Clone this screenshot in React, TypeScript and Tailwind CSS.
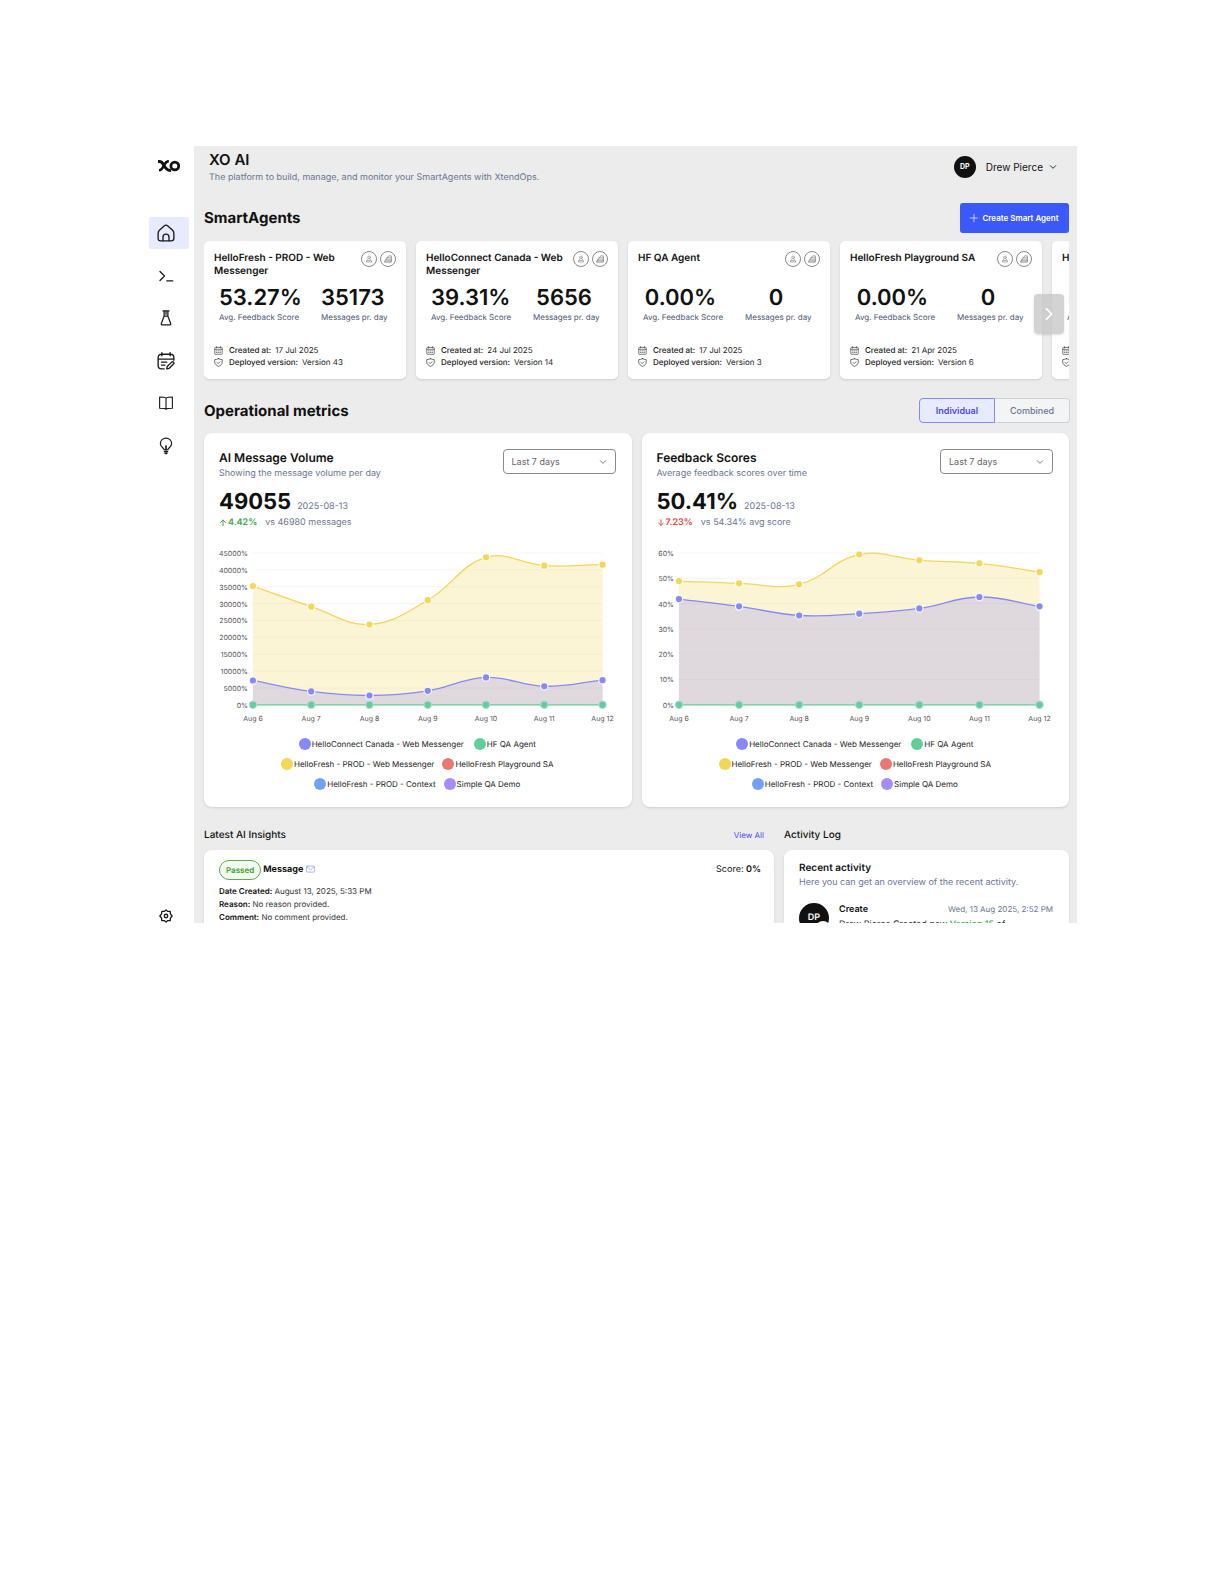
import type { ReactNode } from "react";

type Series = { color: string; values: number[] };

const AGENTS = [
  { name: "HelloFresh - PROD - Web Messenger", score: "53.27%", perDay: "35173", created: "17 Jul 2025", version: "Version 43" },
  { name: "HelloConnect Canada - Web Messenger", score: "39.31%", perDay: "5656", created: "24 Jul 2025", version: "Version 14" },
  { name: "HF QA Agent", score: "0.00%", perDay: "0", created: "17 Jul 2025", version: "Version 3" },
  { name: "HelloFresh Playground SA", score: "0.00%", perDay: "0", created: "21 Apr 2025", version: "Version 6" },
  { name: "HelloFresh - PROD - Context", score: "0.00%", perDay: "0", created: "21 Apr 2025", version: "Version 2" },
];

const DAYS = ["Aug 6", "Aug 7", "Aug 8", "Aug 9", "Aug 10", "Aug 11", "Aug 12"];

const LEGEND = [
  [
    { label: "HelloConnect Canada - Web Messenger", dot: "bg-[#8789f7]" },
    { label: "HF QA Agent", dot: "bg-[#62cf9a]" },
  ],
  [
    { label: "HelloFresh - PROD - Web Messenger", dot: "bg-[#f4d658]" },
    { label: "HelloFresh Playground SA", dot: "bg-[#ea7872]" },
  ],
  [
    { label: "HelloFresh - PROD - Context", dot: "bg-[#73a1f8]" },
    { label: "Simple QA Demo", dot: "bg-[#a78bf8]" },
  ],
];

function Icon({ size, children, width = 1.5, className }: { size: number; children: ReactNode; width?: number; className?: string }) {
  return (
    <svg
      width={size}
      height={size}
      viewBox="0 0 24 24"
      fill="none"
      stroke="currentColor"
      strokeWidth={width}
      strokeLinecap="round"
      strokeLinejoin="round"
      className={className}
      aria-hidden="true"
    >
      {children}
    </svg>
  );
}

const HomeIcon = () => (
  <Icon size={18} width={1.8}>
    <path d="M1.5 12.5C1.5 10.2 1.6 9.6 3.2 8.2L9.5 2.6C11.3 1 12.7 1 14.5 2.6L20.8 8.2C22.4 9.6 22.5 10.2 22.5 12.5V19C22.5 21.8 21.8 22.5 19 22.5H5C2.2 22.5 1.5 21.8 1.5 19Z" />
    <path d="M8 22.3V17.5C8 15 9.6 13.5 12 13.5S16 15 16 17.5V22.3" />
  </Icon>
);
const PromptIcon = () => (
  <Icon size={18} width={1.7}>
    <path d="M4 6l6 6-6 6M13 18.5h8" />
  </Icon>
);
const FlaskIcon = () => (
  <Icon size={18} width={1.7}>
    <path d="M8 2.500h8M9.500 2.500v7L5.800 19.400C5.400 20.600 6 21.300 7 21.300h10c1 0 1.600-.7 1.200-1.900L14.500 9.500v-7M9.500 9.500h5M12 3v4" />
  </Icon>
);
const CalendarEditIcon = () => (
  <Icon size={18} width={1.8}>
    <path d="M6.500 1v4M17.500 1v4M1.500 9.500h21M22.500 11V7.500c0-2.800-1.700-4.500-4.500-4.500H6C3.200 3 1.500 4.700 1.500 7.500V18c0 2.800 1.700 4.500 4.500 4.500h3.500M6 13.500h7M6 17.500h4.500" />
    <path d="M13 22.500l.6-3.200 6-5.800c.9-.8 1.800-.7 2.500 0s.7 1.600-.1 2.500l-6 5.900z" />
  </Icon>
);
const BookIcon = () => (
  <Icon size={18} width={1.5}>
    <path d="M12 5.500C10.500 4.300 8 4 3.500 4v15c4.500 0 7 .2 8.500 1.300 1.500-1.100 4-1.300 8.500-1.300V4c-4.500 0-7 .3-8.500 1.500zM12 5.500v14.800" />
  </Icon>
);
const BulbIcon = () => (
  <Icon size={18} width={1.6}>
    <path d="M9.500 17C9.200 14.500 4.500 13.500 4.500 8.500 4.500 4.500 8 1.500 12 1.500s7.500 3 7.500 7c0 5-4.700 6-5 8.500z" />
    <path d="M12 12v5M10 19.500h4M11 22h2" strokeWidth="2.200" />
  </Icon>
);
const GearIcon = () => (
  <Icon size={14} width={2.300}>
    <path d="M12 1.500l3 2.700 4.200-.2.400 4.200 2.900 3.800-2.900 3.800-.4 4.200-4.200-.2-3 2.700-3-2.700-4.200.2-.4-4.200L1.500 12l2.900-3.800.4-4.200 4.200.2z" />
    <circle cx="12" cy="12" r="3" />
  </Icon>
);
const ChevronDown = ({ size = 8 }: { size?: number }) => (
  <Icon size={size} width={2.600}>
    <path d="M4 8l8 8 8-8" />
  </Icon>
);
const CalendarIcon = () => (
  <Icon size={9} width={1.500}>
    <path d="M2 5.500c0-1 .6-1.700 1.700-1.700h16.600c1.100 0 1.700.7 1.700 1.700v15c0 1-.6 1.700-1.700 1.700H3.700c-1.100 0-1.700-.7-1.700-1.700zM2 9h20M7 1.500v4M17 1.500v4" />
    <path d="M6 13h2M11 13h2M16 13h2M6 17.500h2M11 17.500h2M16 17.500h2" />
  </Icon>
);
const ShieldIcon = () => (
  <Icon size={9} width={1.700}>
    <path d="M12 2c3 1.500 6 2 10 2.200V11c0 5.500-4.500 9-10 11.300C6.500 20 2 16.500 2 11V4.200C6 4 9 3.500 12 2z" />
    <path d="M8 12l3 3 5-5" />
  </Icon>
);

function Logo() {
  return (
    <svg width="22" height="12" viewBox="0 0 22 12" fill="none" stroke="#111" aria-label="XO" role="img">
      <path d="M0 1.600C3.500 1.200 4.200 2.400 5.800 5.200 7.500 8.600 9 10.800 13 10.400" strokeWidth="3" />
      <path d="M10.800 1.200C8 1.200 7.200 3 6 5.200 4.800 8 3.600 10.200 1 10.200" strokeWidth="2.600" />
      <circle cx="16.800" cy="6" r="3.900" strokeWidth="2.800" />
    </svg>
  );
}

function NavItem({ label, active, children }: { label: string; active?: boolean; children: ReactNode }) {
  return (
    <a
      href="#"
      aria-label={label}
      className={
        active
          ? "flex h-8 items-center rounded-[2px] bg-[#e8ebfd] pl-2"
          : "flex h-8 items-center rounded-[2px] pl-2"
      }
    >
      {children}
    </a>
  );
}

function Sidebar() {
  return (
    <aside className="flex w-12 shrink-0 flex-col bg-white pl-[3px] pr-[5px] text-[#1b1b1b]">
      <div className="pl-[9px] pt-[14px]">
        <Logo />
      </div>
      <nav className="mt-[45px] flex h-[245px] flex-col justify-between">
        <NavItem label="Home" active><HomeIcon /></NavItem>
        <NavItem label="Prompts"><PromptIcon /></NavItem>
        <NavItem label="Tests"><FlaskIcon /></NavItem>
        <NavItem label="Planner"><CalendarEditIcon /></NavItem>
        <NavItem label="Knowledge"><BookIcon /></NavItem>
        <NavItem label="Insights"><BulbIcon /></NavItem>
      </nav>
      <a href="#" aria-label="Settings" className="mt-auto pl-[10px]">
        <GearIcon />
      </a>
    </aside>
  );
}

function RoundBadge({ label, children }: { label: string; children: ReactNode }) {
  return (
    <span role="img" aria-label={label} className="flex size-4 items-center justify-center rounded-full border border-[#8a8a8a] text-[#777]">
      {children}
    </span>
  );
}

function AgentCard({ agent }: { agent: (typeof AGENTS)[number] }) {
  return (
    <article className="flex h-[138px] w-[202px] shrink-0 flex-col rounded-[5px] bg-white px-[10px] pb-[11px] pt-[10px] shadow">
      <div className="flex h-[27px] items-start justify-between">
        <h3 className="mt-px w-[144px] text-[10px] font-semibold leading-[13px] text-[#111]">{agent.name}</h3>
        <div className="flex gap-[3px]">
          <RoundBadge label="Assistant">
            <Icon size={8} width={1.800}>
              <circle cx="12" cy="7" r="4" />
              <path d="M9 12c-3 1.500-4 4-5 9h16c-1-5-2-7.500-5-9M8 16.500h8" />
            </Icon>
          </RoundBadge>
          <RoundBadge label="Channel">
            <Icon size={8} width={2}>
              <path d="M2 21.500h20V2.500h-8l-3 6H8l-3 6zM10 8.500h12M6 14.500h16M4 18h18" />
            </Icon>
          </RoundBadge>
        </div>
      </div>
      <div className="mt-[7px] flex gap-[27px] pl-[5px] text-center">
        <div className="w-[75px] whitespace-nowrap">
          <p className="text-[22px] font-semibold leading-[26px] text-[#111]">{agent.score}</p>
          <p className="text-[8px] leading-[12px] text-[#4d5870]">Avg. Feedback Score</p>
        </div>
        <div className="w-[62px] whitespace-nowrap">
          <p className="text-[22px] font-semibold leading-[26px] text-[#111]">{agent.perDay}</p>
          <p className="text-[8px] leading-[12px] text-[#4d5870]">Messages pr. day</p>
        </div>
      </div>
      <dl className="mt-auto whitespace-nowrap text-[8px] leading-[12px] text-[#222]">
        <div className="flex items-center">
          <CalendarIcon />
          <dt className="ml-[6px] font-medium">Created at:</dt>
          <dd className="ml-1">{agent.created}</dd>
        </div>
        <div className="flex items-center">
          <ShieldIcon />
          <dt className="ml-[6px] font-medium">Deployed version:</dt>
          <dd className="ml-1">{agent.version}</dd>
        </div>
      </dl>
    </article>
  );
}

/* Cubic spline through the points, with control points spaced by segment length. */
function splinePath(points: { x: number; y: number }[], tension = 0.4) {
  const controls = points.map((p, i) => {
    const prev = points[i - 1] ?? p;
    const next = points[i + 1] ?? p;
    const d01 = Math.hypot(p.x - prev.x, p.y - prev.y);
    const d12 = Math.hypot(next.x - p.x, next.y - p.y);
    const fa = (tension * d01) / (d01 + d12);
    const fb = (tension * d12) / (d01 + d12);
    return {
      before: { x: p.x - fa * (next.x - prev.x), y: p.y - fa * (next.y - prev.y) },
      after: { x: p.x + fb * (next.x - prev.x), y: p.y + fb * (next.y - prev.y) },
    };
  });
  return points
    .map((p, i) => {
      if (i === 0) return `M${p.x} ${p.y}`;
      const a = controls[i - 1].after;
      const b = controls[i].before;
      return `C${a.x} ${a.y} ${b.x} ${b.y} ${p.x} ${p.y}`;
    })
    .join("");
}

function AreaChart({ title, left, right, max, step, series }: { title: string; left: number; right: number; max: number; step: number; series: Series[] }) {
  const top = 10;
  const bottom = 162;
  const px = (i: number) => left + ((right - left) * i) / (DAYS.length - 1);
  const py = (v: number) => bottom - ((bottom - top) * v) / max;
  const ticks = Array.from({ length: max / step + 1 }, (_, i) => i * step);
  const lines = series.map((s) => ({
    color: s.color,
    points: s.values.map((v, i) => ({ x: px(i), y: py(v) })),
  }));
  return (
    <svg viewBox="0 0 397 184" className="block w-full overflow-visible" role="img" aria-label={title}>
      {ticks.map((t) => (
        <g key={t}>
          <line x1={left} x2={right} y1={py(t)} y2={py(t)} stroke="#f5f5f5" />
          <text x={left - 5} y={py(t) + 3} textAnchor="end" fontSize="7" fill="#555">{t}%</text>
        </g>
      ))}
      {DAYS.map((d, i) => (
        <text key={d} x={px(i)} y={bottom + 16} textAnchor="middle" fontSize="7" fill="#555">{d}</text>
      ))}
      {lines.map((l) => (
        <path key={l.color} d={`${splinePath(l.points)}L${right} ${bottom}L${left} ${bottom}Z`} fill={l.color} fillOpacity="0.25" />
      ))}
      {lines.map((l) => (
        <g key={l.color}>
          <path d={splinePath(l.points)} fill="none" stroke={l.color} strokeWidth="1.300" />
          {l.points.map((p) => (
            <circle
              key={p.x}
              cx={p.x}
              cy={p.y}
              r="3.700"
              fill={l.color}
              stroke={p.y === bottom ? "#b9d3e6" : "#fff"}
              strokeOpacity="0.900"
              strokeWidth="1.200"
            />
          ))}
        </g>
      ))}
    </svg>
  );
}

function MetricCard(props: {
  id: string;
  title: string;
  subtitle: string;
  value: string;
  delta: string;
  up: boolean;
  compare: string;
  chart: ReactNode;
}) {
  return (
    <section className="rounded-lg bg-white pb-[13px] pl-[15px] pr-4 pt-4 shadow">
      <div className="flex items-start justify-between">
        <div className="mt-px">
          <h3 className="text-[12px] font-semibold leading-4 text-[#111]">{props.title}</h3>
          <p className="mt-px text-[9px] leading-[14px] text-[#6b7590]">{props.subtitle}</p>
        </div>
        <div className="relative flex">
          <label htmlFor={props.id} className="sr-only">Period</label>
          <select
            id={props.id}
            className="h-[25px] w-[113px] appearance-none rounded border border-[#8a8a8a] bg-white pl-2 text-[9px] text-[#666]"
          >
            <option>Last 7 days</option>
          </select>
          <span className="pointer-events-none absolute inset-y-0 right-[9px] flex items-center text-[#666]">
            <ChevronDown />
          </span>
        </div>
      </div>
      <p className="mt-2 flex h-[26px] items-baseline gap-[6px] leading-[26px]">
        <span className="text-[22px] font-bold text-[#111]">{props.value}</span>
        <span className="text-[9px] leading-none text-[#6b7590]">2025-08-13</span>
      </p>
      <p className="mt-[1px] flex gap-2 text-[9px] leading-[14px]">
        <span className={props.up ? "flex items-center gap-px font-semibold text-[#36a84a]" : "flex items-center gap-px font-semibold text-[#e5453b]"}>
          <Icon size={8} width={2.800}>
            <path d={props.up ? "M12 20V3M5 10l7-7 7 7" : "M12 2v17M5 12l7 7 7-7"} />
          </Icon>
          {props.delta}
        </span>
        <span className="text-[#6b7590]">{props.compare}</span>
      </p>
      <div className="mt-[13px]">{props.chart}</div>
      <ul className="mt-[7px] text-[8px] leading-5 text-[#222]">
        {LEGEND.map((row, i) => (
          <li key={i}>
            <ul className={i === 0 ? "flex justify-center gap-[10px]" : "flex justify-center gap-2"}>
              {row.map((item) => (
                <li key={item.label} className="flex items-center gap-px">
                  <span className={`size-3 rounded-full ${item.dot}`} />
                  {item.label}
                </li>
              ))}
            </ul>
          </li>
        ))}
      </ul>
    </section>
  );
}

const ZERO = [0, 0, 0, 0, 0, 0, 0];

export default function App() {
  return (
    <div className="min-h-screen bg-white px-[147px] pt-[146px] font-['Inter',sans-serif] text-[#111] [text-rendering:geometricPrecision]">
      <div className="-ml-px flex h-[777px] overflow-hidden">
        <Sidebar />
        <main className="min-w-0 flex-1 bg-[#ececec] pl-[10px] pr-2">
          <header className="flex justify-between pl-[5px] pr-3 pt-[6px]">
            <div>
              <h1 className="text-[15px] font-semibold leading-4">XO AI</h1>
              <p className="mt-[3px] text-[9px] leading-[13px] text-[#6b7590]">
                The platform to build, manage, and monitor your SmartAgents with XtendOps.
              </p>
            </div>
            <button type="button" className="mt-1 flex h-[22px] items-center text-[10px]">
              <span className="flex size-[22px] items-center justify-center rounded-full bg-[#111] text-[7px] font-bold text-white">DP</span>
              <span className="ml-[10px] mr-[6px]">Drew Pierce</span>
              <ChevronDown />
            </button>
          </header>

          <div className="mt-[19px] flex items-center justify-between">
            <h2 className="text-[15px] font-bold leading-5">SmartAgents</h2>
            <button type="button" className="flex h-[30px] w-[109px] items-center justify-center gap-1 rounded-[3px] bg-[#3b58f8] text-[8px] font-semibold text-white">
              <Icon size={8} width={2}>
                <path d="M12 1v22M1 12h22" />
              </Icon>
              Create Smart Agent
            </button>
          </div>

          <div className="relative">
            <div className="-mb-2 flex gap-[10px] overflow-hidden pb-2 pt-2">
              {AGENTS.map((a) => (
                <AgentCard key={a.name} agent={a} />
              ))}
            </div>
            <button
              type="button"
              aria-label="Next agents"
              className="absolute right-[5px] top-[61px] flex h-10 w-[30px] items-center justify-center rounded bg-[#c4c4c4]/75 text-white shadow"
            >
              <Icon size={16} width={2.400}>
                <path d="M8 4l8 8-8 8" />
              </Icon>
            </button>
          </div>

          <div className="-mr-px mt-[19px] flex items-center justify-between">
            <h2 className="text-[15px] font-bold leading-5">Operational metrics</h2>
            <div role="group" aria-label="Metric view" className="flex text-[9px] font-medium">
              <button type="button" aria-pressed="true" className="h-[25px] w-[76px] rounded-l border border-[#8389f7] bg-[#e8ebfd] font-semibold text-[#4848ee]">
                Individual
              </button>
              <button type="button" aria-pressed="false" className="h-[25px] w-[75px] rounded-r border border-l-0 border-[#cfd1d4] bg-[#f2f4f5] text-[#6b7590]">
                Combined
              </button>
            </div>
          </div>

          <div className="mt-[10px] grid grid-cols-2 gap-[10px]">
            <MetricCard
              id="volume-period"
              title="AI Message Volume"
              subtitle="Showing the message volume per day"
              value="49055"
              delta="4.42%"
              up
              compare="vs 46980 messages"
              chart={
                <AreaChart
                  title="AI message volume per day"
                  left={34}
                  right={384}
                  max={45000}
                  step={5000}
                  series={[
                    { color: "#f4d658", values: [35200, 29100, 23800, 31000, 43700, 41250, 41550] },
                    { color: "#8789f7", values: [7200, 3950, 2760, 4150, 8100, 5500, 7300] },
                    { color: "#62cf9a", values: ZERO },
                  ]}
                />
              }
            />
            <MetricCard
              id="score-period"
              title="Feedback Scores"
              subtitle="Average feedback scores over time"
              value="50.41%"
              delta="7.23%"
              up={false}
              compare="vs 54.34% avg score"
              chart={
                <AreaChart
                  title="Average feedback score per day"
                  left={22}
                  right={383}
                  max={60}
                  step={10}
                  series={[
                    { color: "#f4d658", values: [48.9, 48, 47.6, 59.4, 57.1, 55.9, 52.4] },
                    { color: "#8789f7", values: [41.8, 38.9, 35.3, 36, 38.1, 42.6, 38.9] },
                    { color: "#62cf9a", values: ZERO },
                  ]}
                />
              }
            />
          </div>

          <div className="mt-5 grid grid-cols-[2fr_1fr] gap-[10px]">
            <section>
              <div className="flex items-center justify-between pr-[10px]">
                <h2 className="text-[10px] font-medium leading-[17px]">Latest AI Insights</h2>
                <a href="#" className="text-[8px] leading-[17px] text-[#4848ee]">View All</a>
              </div>
              <article className="mt-[6px] h-[200px] rounded-lg bg-white pl-[15px] pr-[13px] pt-[10px] shadow">
                <div className="flex items-center">
                  <span className="flex h-5 items-center rounded-full border border-[#62a950] bg-[#f3faf0] px-[6px] text-[8px] font-semibold text-[#3f9a2f]">Passed</span>
                  <h3 className="ml-[2px] text-[9px] font-bold">Message</h3>
                  <Icon size={9} width={1.800} className="ml-[3px] text-[#8d97f7]">
                    <rect x="1.500" y="3" width="21" height="16" rx="1.500" />
                    <path d="M2 5l10 8 10-8" />
                  </Icon>
                  <p className="ml-auto text-[9px]">Score: <b className="font-semibold">0%</b></p>
                </div>
                <div className="mt-[5px] text-[8px] leading-[13px] text-[#333]">
                  <p><b className="font-semibold text-[#111]">Date Created:</b> August 13, 2025, 5:33 PM</p>
                  <p><b className="font-semibold text-[#111]">Reason:</b> No reason provided.</p>
                  <p><b className="font-semibold text-[#111]">Comment:</b> No comment provided.</p>
                </div>
              </article>
            </section>

            <section className="min-w-0">
              <h2 className="text-[10px] font-medium leading-[17px]">Activity Log</h2>
              <article className="mt-[6px] h-[200px] rounded-lg bg-white pl-[15px] pr-4 pt-3 shadow">
                <h3 className="text-[10px] font-semibold leading-[13px]">Recent activity</h3>
                <p className="mt-[1px] text-[9px] leading-[13px] text-[#6b7590]">Here you can get an overview of the recent activity.</p>
                <div className="mt-[14px] flex">
                  <div className="relative h-[30px] w-[30px] shrink-0">
                    <span className="flex size-[30px] items-center justify-center rounded-full bg-[#111] text-[9px] font-semibold text-white">DP</span>
                    <span className="absolute -bottom-1 -right-[2px] size-4 rounded-full bg-white" />
                  </div>
                  <div className="ml-[10px] min-w-0 flex-1">
                    <div className="flex items-center justify-between leading-[13px]">
                      <h4 className="text-[9px] font-semibold">Create</h4>
                      <time className="text-[8px] text-[#6b7590]">Wed, 13 Aug 2025, 2:52 PM</time>
                    </div>
                    <p className="mt-[2px] text-[9px] leading-[13px] text-[#333]">
                      Drew Pierce Created new <span className="font-medium text-[#36a84a]">Version 15</span> of
                    </p>
                  </div>
                </div>
              </article>
            </section>
          </div>
        </main>
      </div>
    </div>
  );
}
